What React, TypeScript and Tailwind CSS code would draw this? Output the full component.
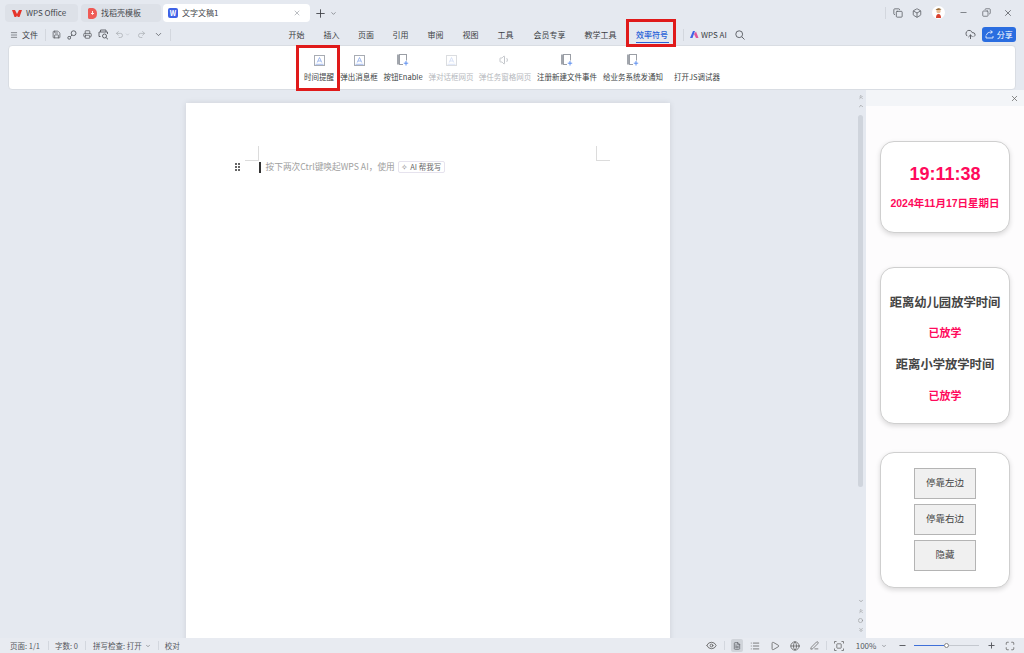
import {
  ChevronDown, CloudUpload, Eye, Globe, List, Maximize, Menu, Minus, PenLine, Play, Plus, Printer, Redo2,
  Save, Undo2, X, Box, Copy, FileText, Volume1, ChevronsUp, ChevronsDown, ChevronUp, Circle,
} from "lucide-react";

const uiFont = { fontFamily: '"Noto Sans CJK SC", "Noto Sans", sans-serif' };

const navTabs = [
  { label: "开始", width: "w-[35px]" },
  { label: "插入", width: "w-[35px]" },
  { label: "页面", width: "w-[34px]" },
  { label: "引用", width: "w-[35px]" },
  { label: "审阅", width: "w-[35px]" },
  { label: "视图", width: "w-[35px]" },
  { label: "工具", width: "w-[35px]" },
  { label: "会员专享", width: "w-[53px]" },
  { label: "教学工具", width: "w-[49px]" },
];

function SquareA({ disabled }: { disabled?: boolean }) {
  return (
    <svg width="11" height="11" viewBox="0 0 11 11" fill="none" className={disabled ? "opacity-40" : ""}>
      <rect x="0.5" y="0.5" width="10" height="10" stroke="#a8acb3" />
      <path d="M3.2 7.5 L5.5 2.5 L7.8 7.5 M4 6 H7" stroke="#7fa0e8" strokeWidth="0.7" />
      <path d="M1.5 9.3 H9.5" stroke="#7fa0e8" strokeWidth="0.7" />
    </svg>
  );
}

function DocPlus() {
  return (
    <svg width="12" height="12" viewBox="0 0 12 12" fill="none">
      <rect x="0" y="0.5" width="3" height="10" fill="#a2a6ad" />
      <rect x="2.5" y="0.5" width="7" height="10" fill="#fff" stroke="#9a9ea5" />
      <rect x="6" y="6.5" width="6" height="5.5" fill="#fff" />
      <path d="M9 7 V11.5 M6.8 9.2 H11.2" stroke="#4f86ee" strokeWidth="0.9" />
    </svg>
  );
}

function KeyIcon() {
  return (
    <svg width="10" height="10" viewBox="0 0 10 10" fill="none" stroke="#55585d" strokeWidth="0.9" className="ml-[6px]">
      <circle cx="6.6" cy="3.2" r="2.4" />
      <circle cx="2.2" cy="7.8" r="1.4" />
      <path d="M3.3 6.8 L5 5" />
    </svg>
  );
}

function PrintPreview() {
  return (
    <svg width="11" height="11" viewBox="0 0 11 11" fill="none" stroke="#55585d" strokeWidth="0.9" className="ml-[6px]">
      <path d="M2.5 3 V1 H8 V3 M2.5 7.5 H1 V3 H9.5 V5" />
      <circle cx="6.5" cy="7" r="2" />
      <path d="M8 8.5 L10 10.3" />
    </svg>
  );
}

function FitIcon() {
  return (
    <svg width="10" height="10" viewBox="0 0 10 10" fill="none" stroke="#666" strokeWidth="0.8" className="ml-[7px]">
      <path d="M0.5 2.5 V0.5 H2.5 M7.5 0.5 H9.5 V2.5 M9.5 7.5 V9.5 H7.5 M2.5 9.5 H0.5 V7.5" />
      <rect x="2.8" y="2.8" width="4.4" height="4.4" rx="0.5" />
    </svg>
  );
}

function ShareArrow() {
  return (
    <svg width="10" height="9" viewBox="0 0 10 9" fill="none" stroke="#fff" strokeWidth="0.8">
      <path d="M1 5.5 V8 H8 V6" />
      <path d="M1.5 5 Q2 2 7 2 M5.5 0.5 L7.5 2 L5.5 3.5" />
    </svg>
  );
}

function RibbonItem({ label, width, disabled, icon }: { label: string; width: string; disabled?: boolean; icon?: React.ReactNode }) {
  return (
    <div className={`${width} flex flex-col items-center pt-[8px] shrink-0`}>
      <div className="h-[12px] flex items-center justify-center">{icon}</div>
      <p className={`mt-[6px] text-[7.5px] leading-[10px] whitespace-nowrap ${disabled ? "text-[#b5b8bd]" : "text-[#3c3f44]"}`}>{label}</p>
    </div>
  );
}

function Divider({ className }: { className?: string }) {
  return <div className={`w-px h-[12px] bg-[#d3d7de] shrink-0 ${className ?? ""}`} />;
}

function Card({ className, children }: { className: string; children: React.ReactNode }) {
  return (
    <div className={`w-[130px] ml-[14px] rounded-[14px] border border-[#cfcfcf] bg-white shadow-[0_2px_5px_rgba(0,0,0,0.14)] flex flex-col items-center ${className}`}>
      {children}
    </div>
  );
}

function DockButton({ label }: { label: string }) {
  return (
    <button type="button" className="w-[62px] h-[31px] bg-[#f0f0f0] border border-[#b4b4b4] text-[9.5px] text-[#444]">{label}</button>
  );
}

export default function App() {
  return (
    <div className="w-[1024px] h-[653px] bg-[#e5e9f0] flex flex-col overflow-hidden text-[#3c3f44]" style={uiFont}>
      {/* title bar */}
      <div className="h-[24px] pt-[4px] pl-[5px] flex shrink-0">
        <div className="w-[73px] h-[18px] rounded-[4px] bg-[#dde1e8] flex items-center pl-[7px] gap-[4px]">
          <svg width="10" height="9" viewBox="0 0 10 9"><path d="M0 1 H3 L5 5 L7 1 H10 L7.5 8 H5.8 L5 6.5 L4.2 8 H2.5 Z" fill="#e5352b" /></svg>
          <span className="text-[8px] text-[#44474c] whitespace-nowrap">WPS Office</span>
        </div>
        <div className="w-[80px] h-[18px] ml-[3px] rounded-[4px] bg-[#dde1e8] flex items-center pl-[7px] gap-[4px]">
          <svg width="9" height="11" viewBox="0 0 9 11"><path d="M0 1.5 Q0 0 1.5 0 H5 Q9 1 9 5.5 Q9 10 5 11 H1.5 Q0 11 0 9.5 Z" fill="#ef5a55" /><path d="M4.5 3 V6 M3 5 L4.5 6.5 L6 5" stroke="#fff" strokeWidth="0.9" fill="none" /></svg>
          <span className="text-[8px] text-[#44474c] whitespace-nowrap">找稻壳模板</span>
        </div>
        <div className="w-[147px] h-[18px] ml-[2px] rounded-[4px] bg-white flex items-center pl-[5px]">
          <div className="w-[10px] h-[10px] rounded-[2px] bg-[#3f63e6] text-white text-[7px] font-bold leading-[10px] text-center">W</div>
          <span className="text-[8px] ml-[4px] text-[#44474c] whitespace-nowrap">文字文稿1</span>
          <X size={8} className="ml-auto mr-[9px] text-[#9a9ea5]" />
        </div>
        <Plus size={13} strokeWidth={1.6} className="ml-[4px] mt-[3px] text-[#3c3f44]" />
        <ChevronDown size={7} className="ml-[3px] mt-[6px] text-[#55585d]" />
        <Divider className="ml-[548px] mt-[3px]" />
        <Copy size={10} className="ml-[7px] mt-[4px] text-[#5f6369]" />
        <Box size={10} className="ml-[9px] mt-[4px] text-[#5f6369]" />
        <svg width="13" height="13" viewBox="0 0 13 13" className="ml-[10px] mt-[2px]">
          <circle cx="6.5" cy="6.5" r="6.5" fill="#fff" />
          <circle cx="6.5" cy="5" r="2.2" fill="#e9bd95" />
          <path d="M3.5 4 Q6 1 9.5 3.5 L7 3.8 Z" fill="#8a5a22" />
          <path d="M4 12 Q4 8 6.5 8 Q9 8 9 12 Z" fill="#d9412f" />
        </svg>
        <Minus size={9} className="ml-[14px] mt-[4px] text-[#5f6369]" />
        <Copy size={9} className="ml-[14px] mt-[4px] text-[#5f6369] -scale-x-100" />
        <X size={10} className="ml-[12px] mt-[4px] text-[#5f6369]" />
      </div>

      {/* menu row */}
      <div className="h-[21px] flex items-center shrink-0 relative">
        <div className="w-[279px] flex items-center shrink-0">
          <Menu size={8} className="ml-[10px] text-[#55585d]" />
          <span className="ml-[4px] text-[8px]">文件</span>
          <Divider className="ml-[7px]" />
          <Save size={9} className="ml-[6px] text-[#55585d]" />
          <KeyIcon />
          <Printer size={9} className="ml-[6px] text-[#55585d]" />
          <PrintPreview />
          <Undo2 size={9} className="ml-[6px] text-[#a9adb3]" />
          <ChevronDown size={5} className="ml-[1px] text-[#a9adb3]" />
          <Redo2 size={9} className="ml-[7px] text-[#a9adb3]" />
          <ChevronDown size={9} className="ml-[8px] text-[#55585d]" />
          <Divider className="ml-[7px]" />
        </div>
        {navTabs.map((tab) => (
          <div key={tab.label} className={`${tab.width} text-center text-[8px] whitespace-nowrap shrink-0`}>{tab.label}</div>
        ))}
        {/* active tab with red marker */}
        <div className="relative w-[52px] h-[21px] ml-[1px] flex flex-col items-center justify-center shrink-0">
          <span className="text-[8px] leading-[11px] mt-[3px] font-medium text-[#2a62d8] whitespace-nowrap">效率符号</span>
          <div className="w-[33px] h-[1.5px] mt-[2px] bg-[#2a62d8]" />
          <div className="absolute left-0 top-[-5px] w-[50px] h-[28px] border-[3px] border-[#e01a1a]" />
        </div>
        <Divider className="ml-[5px]" />
        <svg width="10" height="9" viewBox="0 0 10 9" className="ml-[5px]">
          <path d="M1 8 L4 1 H6 L3.5 8 Z" fill="#3f63e6" />
          <path d="M5 4 L7 1.5 L9.5 8 H7 Z" fill="#e0559a" />
        </svg>
        <span className="ml-[2px] text-[8px] whitespace-nowrap">WPS AI</span>
        <svg width="10" height="10" viewBox="0 0 10 10" fill="none" stroke="#55585d" strokeWidth="0.9" className="ml-[8px]">
          <circle cx="4.2" cy="4.2" r="3.4" />
          <path d="M6.8 6.8 L9.5 9.5" />
        </svg>
        <CloudUpload size={11} className="ml-[220px] text-[#55585d]" />
        <div className="ml-[6px] w-[34px] h-[15px] rounded-[3px] bg-[#2a6de0] flex items-center justify-center gap-[2px] text-white">
          <ShareArrow />
          <span className="text-[8px] whitespace-nowrap">分享</span>
        </div>
      </div>

      {/* ribbon */}
      <div className="mx-[8px] h-[45px] bg-white rounded-[4px] border border-[#d9dde3] pl-[290px] flex shrink-0">
        <div className="relative flex shrink-0">
          <RibbonItem label="时间提醒" width="w-[40px]" icon={<SquareA />} />
          <div className="absolute left-[-3px] top-[-1px] w-[44px] h-[46px] border-[3px] border-[#e01a1a]" />
        </div>
        <RibbonItem label="弹出消息框" width="w-[40px]" icon={<SquareA />} />
        <RibbonItem label="按钮Enable" width="w-[48px]" icon={<DocPlus />} />
        <RibbonItem label="弹对话框网页" width="w-[48px]" disabled icon={<SquareA disabled />} />
        <RibbonItem label="弹任务窗格网页" width="w-[60px]" disabled icon={<Volume1 size={12} className="text-[#c2c5ca]" />} />
        <RibbonItem label="注册新建文件事件" width="w-[64px]" icon={<DocPlus />} />
        <RibbonItem label="给业务系统发通知" width="w-[68px]" icon={<DocPlus />} />
        <RibbonItem label="打开JS调试器" width="w-[60px]" />
      </div>

      <div className="flex flex-1 min-h-0 overflow-hidden">
        {/* document area */}
        <div className="w-[866px] flex shrink-0 pt-[13px] pl-[186px]">
          <div className="relative w-[484px] h-[600px] bg-white shadow-[0_0_6px_rgba(0,0,0,0.1)] pt-[58px] shrink-0">
            <div className="absolute left-[59px] top-[43px] w-[14px] h-[15px] border-r border-b border-[#dcdcdc]" />
            <div className="absolute left-[410px] top-[43px] w-[14px] h-[15px] border-l border-b border-[#dcdcdc]" />
            <div className="flex items-center h-[12px]">
              <div className="ml-[49px] grid grid-cols-2 gap-[1px] w-[5px]">
                {[0, 1, 2, 3, 4, 5].map((i) => (
                  <span key={i} className="w-[2px] h-[2px] bg-[#666]" />
                ))}
              </div>
              <div className="ml-[19px] w-[1.5px] h-[11px] bg-[#333]" />
              <span className="ml-[5px] text-[8.7px] text-[#a0a0a0] whitespace-nowrap">按下两次Ctrl键唤起WPS AI，使用</span>
              <div className="ml-[3px] w-[47px] h-[12px] rounded-[2px] border border-[#e6e3ee] flex items-center justify-center gap-[2px] text-[7.5px] text-[#666]">
                <span className="text-[#777]">✧</span>
                <span className="whitespace-nowrap">AI 帮我写</span>
              </div>
            </div>
          </div>
          {/* scrollbar */}
          <div className="ml-[187px] w-[7px] h-[548px] -mt-[13px] flex flex-col items-center shrink-0 pt-[4px] text-[#777]">
            <ChevronsUp size={6} className="shrink-0" />
            <ChevronUp size={6} className="mt-[3px] shrink-0" />
            <div className="w-[5px] h-[372px] mt-[6px] rounded-[3px] bg-[#cfd4dc] shrink-0" />
            <ChevronDown size={6} className="mt-[111px] shrink-0" />
            <ChevronsUp size={6} className="mt-[4px] shrink-0" />
            <Circle size={5} className="mt-[4px] shrink-0" />
            <ChevronsDown size={6} className="mt-[4px] shrink-0" />
          </div>
        </div>

        {/* task pane */}
        <div className="w-[158px] bg-[#fdfcfd] flex flex-col shrink-0">
          <div className="h-[16px] bg-[#f3f5f8] flex items-center justify-end pr-[5px] shrink-0">
            <X size={9} className="text-[#666]" />
          </div>
          <div style={{ fontFamily: '"Liberation Sans", "Noto Sans CJK SC", sans-serif' }}>
            <Card className="mt-[35px] h-[92px]">
              <p className="mt-[20px] text-[18px] leading-[24px] font-bold text-[#ff0a5c]">19:11:38</p>
              <p className="mt-[10px] text-[10.5px] leading-[14px] font-bold text-[#ff0a5c] whitespace-nowrap">2024年11月17日星期日</p>
            </Card>
            <Card className="mt-[34px] h-[157px] font-bold">
              <p className="mt-[26px] text-[12.3px] leading-[18px] text-[#444] whitespace-nowrap">距离幼儿园放学时间</p>
              <p className="mt-[14px] text-[11px] leading-[14px] text-[#ff0a5c]">已放学</p>
              <p className="mt-[16px] text-[12.3px] leading-[18px] text-[#444] whitespace-nowrap">距离小学放学时间</p>
              <p className="mt-[15px] text-[11px] leading-[14px] text-[#ff0a5c]">已放学</p>
            </Card>
            <Card className="mt-[28px] h-[136px] pt-[15px] gap-[5px]">
              <DockButton label="停靠左边" />
              <DockButton label="停靠右边" />
              <DockButton label="隐藏" />
            </Card>
          </div>
        </div>
      </div>

      {/* status bar */}
      <div className="h-[15px] bg-[#e8ebf1] flex items-center text-[7.5px] text-[#55585d] shrink-0">
        <span className="ml-[10px] whitespace-nowrap">页面: 1/1</span>
        <Divider className="ml-[8px] !h-[9px]" />
        <span className="ml-[6px] whitespace-nowrap">字数: 0</span>
        <Divider className="ml-[7px] !h-[9px]" />
        <span className="ml-[7px] whitespace-nowrap">拼写检查: 打开</span>
        <ChevronDown size={6} className="ml-[3px]" />
        <Divider className="ml-[7px] !h-[9px]" />
        <span className="ml-[6px] whitespace-nowrap">校对</span>
        <Eye size={11} className="ml-[526px] text-[#666]" />
        <Divider className="ml-[7px] !h-[9px]" />
        <div className="ml-[6px] w-[12px] h-[13px] rounded-[2px] bg-[#d0d4da] flex items-center justify-center">
          <FileText size={8} />
        </div>
        <List size={10} className="ml-[7px] text-[#666]" />
        <Play size={10} className="ml-[10px] text-[#666]" />
        <Globe size={10} className="ml-[10px] text-[#666]" />
        <PenLine size={9} className="ml-[10px] text-[#666]" />
        <Divider className="ml-[7px] !h-[9px]" />
        <FitIcon />
        <span className="ml-[12px] text-[8px] whitespace-nowrap">100%</span>
        <ChevronDown size={6} className="ml-[5px]" />
        <Minus size={9} strokeWidth={2.5} className="ml-[11px]" />
        <div className="relative ml-[7px] w-[65px] h-[1px] bg-[#c4c8cf]">
          <div className="w-[30px] h-[1px] bg-[#3f70d8]" />
          <div className="absolute left-[30px] top-[-2px] w-[5px] h-[5px] rounded-full bg-white border border-[#888]" />
        </div>
        <Plus size={9} strokeWidth={2.5} className="ml-[8px]" />
        <Maximize size={10} className="ml-[9px] text-[#666]" />
      </div>
    </div>
  );
}
